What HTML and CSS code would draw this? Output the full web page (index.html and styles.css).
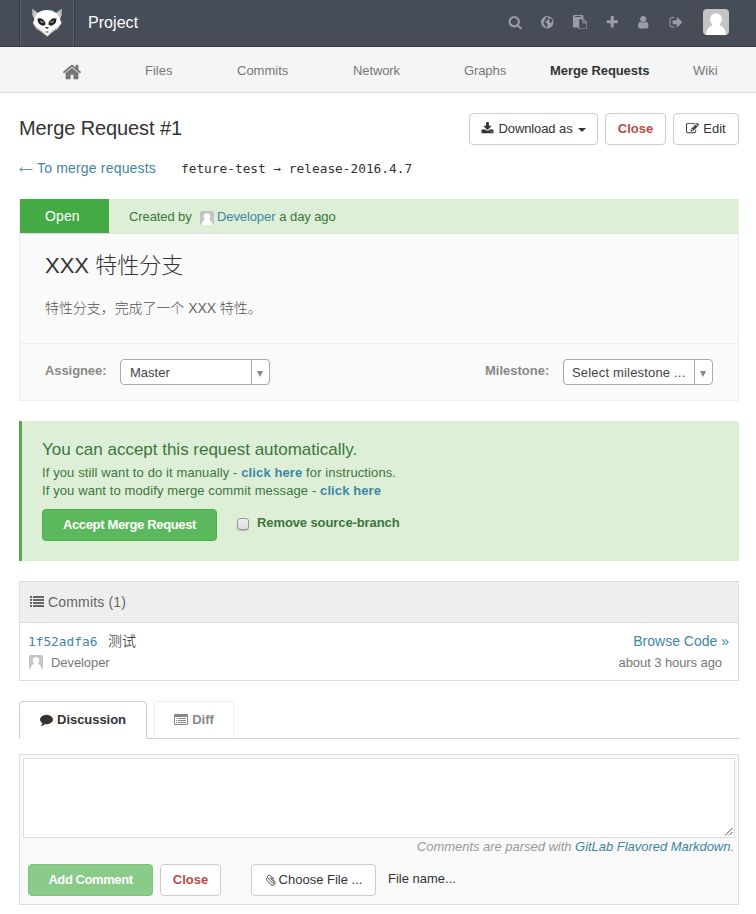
FILE: index.html
```html
<!DOCTYPE html>
<html lang="en">
<head>
<meta charset="utf-8">
<title>Merge Request #1</title>
<link rel="stylesheet" href="styles.css">
</head>
<body>
<svg class="defs" width="0" height="0">
  <symbol id="avatar" viewBox="0 0 26 26"><rect width="26" height="26" fill="#c4c4c4"/><circle cx="13" cy="10.200" r="6" fill="#fff"/><path d="M9 12h8v4.500c3.500 1 5.600 4 6 9.500H3c.4-5.500 2.500-8.500 6-9.500z" fill="#fff"/></symbol>
</svg>
<header class="topbar">
  <a class="logo" href="#">
    <svg width="32" height="30" viewBox="0 0 32 30">
      <path d="M1.500 1l5.500 4q3-3 9-3t9 3l5.500-4v6l-1.500 4 1.500 4-4 6-4 2-6 5.500L10 23l-4-2-4-6 1.500-4L1.500 7z" fill="#fff"/>
      <path d="M1.500 1l5 4-3.500 5-1-4zM30.500 1l-5 4 3.500 5 1-4z" fill="#aaa"/>
      <path d="M3 3.500l2 2-1.500 2.500zM29 3.500l-2 2L28.500 8z" fill="#eee"/>
      <path d="M1.500 14.500l4 4.500 5 3.500 5.500 5 5.500-5 5-3.500 4-4.500-3 5.500-5 3.500L16 28.500 9.500 23.500 4.500 20z" fill="#bbb"/>
      <path d="M6.500 10.500q3-1 5.500 1 2.300 1.500 2.500 5-2 2-4.500.5-3.500-1.500-3.500-6.500zM25.500 10.500q-3-1-5.500 1-2.300 1.500-2.500 5 2 2 4.500.5 3.500-1.500 3.500-6.500z" fill="#222"/>
      <path d="M9 13.200q2-1.200 4 1-2 1.400-4-1zM23 13.200q-2-1.200-4 1 2 1.400 4-1z" fill="#bbb"/>
      <circle cx="11.200" cy="13.600" r=".7" fill="#222"/><circle cx="20.800" cy="13.600" r=".7" fill="#222"/>
      <path d="M14 19h4l-2 2.200zM14.500 23.500h3v1h-3z" fill="#444"/>
    </svg>
  </a>
  <h1 class="project">Project</h1>
  <nav class="tools">
    <a class="nudge" href="#"><svg class="fa" viewBox="0 0 1792 1792"><path d="M1216 832q0-185-131.500-316.500t-316.500-131.500-316.500 131.500-131.500 316.500 131.500 316.500 316.500 131.500 316.500-131.500 131.500-316.500zm512 832q0 52-38 90t-90 38q-54 0-90-38l-343-342q-179 124-399 124-143 0-273.500-55.500t-225-150-150-225-55.500-273.500 55.500-273.500 150-225 225-150 273.500-55.500 273.500 55.500 225 150 150 225 55.500 273.500q0 220-124 399l343 343q37 37 37 90z"/></svg></a>
    <a class="nudge" href="#"><svg class="fa" viewBox="0 0 14 14"><circle cx="7" cy="7" r="6"/><path class="land" d="M6.300 1.900L8.300 2 7.500 3.200l1 .5-1.300 1.200-1.400 1.200-1 .9 1.600.7 1 1.400-1 2.600L5.300 12l-.5-2.200-1.500-1.300L4 6.200l.8-2zM9.600 3l1.600.9.900 2.100-1.500 1.700-1.600-.9.200-1.500-.5-1z"/></svg></a>
    <a class="nudge" href="#"><svg class="fa" viewBox="0 0 1792 1792"><path d="M768 1664h896v-640h-416q-40 0-68-28t-28-68v-416h-384v1152zm256-1440v-64q0-13-9.500-22.500t-22.500-9.500h-704q-13 0-22.500 9.500t-9.500 22.500v64q0 13 9.500 22.500t22.500 9.500h704q13 0 22.500-9.500t9.500-22.500zm256 672h299l-299-299v299zm512 128v672q0 40-28 68t-68 28h-960q-40 0-68-28t-28-68v-160h-544q-40 0-68-28t-28-68v-1344q0-40 28-68t68-28h1088q40 0 68 28t28 68v328q21 13 36 28l408 408q28 28 48 76t20 88z"/></svg></a>
    <a class="nudge" href="#"><svg class="fa" viewBox="0 0 1792 1792"><path d="M1600 736v192q0 40-28 68t-68 28h-416v416q0 40-28 68t-68 28h-192q-40 0-68-28t-28-68v-416h-416q-40 0-68-28t-28-68v-192q0-40 28-68t68-28h416v-416q0-40 28-68t68-28h192q40 0 68 28t28 68v416h416q40 0 68 28t28 68z"/></svg></a>
    <a href="#"><svg class="fa" viewBox="0 0 1792 1792"><path d="M1536 1399q0 109-62.500 187t-150.500 78h-854q-88 0-150.500-78t-62.500-187q0-85 8.500-160.500t31.500-152 58.500-131 94-89 134.500-34.500q131 128 313 128t313-128q76 0 134.500 34.500t94 89 58.500 131 31.500 152 8.500 160.500zm-256-887q0 159-112.500 271.500t-271.500 112.500-271.500-112.500-112.500-271.500 112.500-271.500 271.500-112.500 271.500 112.500 112.500 271.500z"/></svg></a>
    <a href="#"><svg class="fa" viewBox="0 0 1792 1792"><path d="M704 1440q0 4 1 20t.5 26.500-3 23.500-10 19.500-20.500 6.500h-320q-119 0-203.500-84.500t-84.500-203.500v-704q0-119 84.500-203.500t203.500-84.500h320q13 0 22.500 9.500t9.500 22.500q0 4 1 20t.5 26.500-3 23.500-10 19.500-20.500 6.500h-320q-66 0-113 47t-47 113v704q0 66 47 113t113 47h312l11.500 1 11.500 3 8 5.500 7 9 2 13.500zm928-544q0 26-19 45l-544 544q-19 19-45 19t-45-19-19-45v-288h-448q-26 0-45-19t-19-45v-384q0-26 19-45t45-19h448v-288q0-26 19-45t45-19 45 19l544 544q19 19 19 45z"/></svg></a>
  </nav>
  <svg class="me"><use href="#avatar"/></svg>
</header>
<nav class="mainnav">
  <a class="home" href="#"><svg width="20" height="20" viewBox="0 0 1792 1792"><path d="M1472 992v480q0 26-19 45t-45 19h-384v-384h-256v384h-384q-26 0-45-19t-19-45v-480q0-1 .5-3t.5-3l575-474 575 474q1 2 1 6zm223-69l-62 74q-8 9-21 11h-3q-13 0-21-7l-692-577-692 577q-12 8-24 7-13-2-21-11l-62-74q-8-10-7-23.500t11-21.500l719-599q32-26 76-26t76 26l244 204v-195q0-14 9-23t23-9h192q14 0 23 9t9 23v408l219 182q10 8 11 21.500t-7 23.500z"/></svg></a>
  <a class="n-files" href="#">Files</a>
  <a class="n-commits" href="#">Commits</a>
  <a class="n-network" href="#">Network</a>
  <a class="n-graphs" href="#">Graphs</a>
  <a class="n-merge active" href="#">Merge Requests</a>
  <a class="n-wiki" href="#">Wiki</a>
</nav>
<main class="content">
  <div class="titlerow">
    <h2>Merge Request #1</h2>
    <div class="actions">
      <a class="btn download" href="#"><svg class="bi" viewBox="0 0 1792 1792"><path fill-rule="evenodd" d="M1344 1344q0-26-19-45t-45-19-45 19-19 45 19 45 45 19 45-19 19-45zm256 0q0-26-19-45t-45-19-45 19-19 45 19 45 45 19 45-19 19-45zm128-224v320q0 40-28 68t-68 28h-1472q-40 0-68-28t-28-68v-320q0-40 28-68t68-28h465l135 136q58 56 136 56t136-56l136-136h464q40 0 68 28t28 68zm-325-569q17 41-14 70l-448 448q-18 19-45 19t-45-19l-448-448q-31-29-14-70 17-39 59-39h256v-448q0-26 19-45t45-19h256q26 0 45 19t19 45v448h256q42 0 59 39z"/></svg><span>Download as</span><i class="caret"></i></a>
      <a class="btn close" href="#">Close</a>
      <a class="btn edit" href="#"><svg class="bi" viewBox="0 0 1792 1792"><path d="M888 1184l116-116-152-152-116 116v56h96v96h56zm440-720q-16-16-33 1l-350 350q-17 17-1 33t33-1l350-350q17-17 1-33zm80 594v190q0 119-84.500 203.500t-203.500 84.500h-832q-119 0-203.500-84.500t-84.500-203.500v-832q0-119 84.500-203.500t203.500-84.500h832q63 0 117 25 15 7 18 23 3 17-9 29l-49 49q-14 14-32 8-23-6-45-6h-832q-66 0-113 47t-47 113v832q0 66 47 113t113 47h832q66 0 113-47t47-113v-126q0-13 9-22l64-64q15-15 35-7t20 29zm-96-738l288 288-672 672h-288v-288zm444 132l-92 92-288-288 92-92q28-28 68-28t68 28l152 152q28 28 28 68t-28 68z"/></svg><span>Edit</span></a>
    </div>
  </div>
  <div class="branches">
    <a class="back" href="#"><svg width="14" height="10" viewBox="0 0 14 10"><path d="M.8 6.500H13.500M3.500 4.300L.9 6.500l2.600 2.200" fill="none" stroke="currentColor" stroke-width=".9"/></svg><span>To merge requests</span></a>
    <code>feture-test → release-2016.4.7</code>
  </div>
  <section class="request">
    <div class="status">
      <strong class="state">Open</strong>
      <span class="by">Created by</span>
      <svg class="face"><use href="#avatar"/></svg>
      <a href="#">Developer</a><span class="when">a day ago</span>
    </div>
    <div class="body">
      <h3>XXX <span>特性分支</span></h3>
      <p><span class="cjk">特性分支，完成了一个</span> XXX <span class="cjk">特性。</span></p>
    </div>
    <div class="context">
      <label>Assignee:</label>
      <div class="select assignee"><span>Master</span><i></i></div>
      <label class="ms">Milestone:</label>
      <div class="select milestone"><span>Select milestone ...</span><i></i></div>
    </div>
  </section>
  <section class="accept">
    <h4>You can accept this request automatically.</h4>
    <p class="l1">If you still want to do it manually - <a href="#">click here</a> for instructions.</p>
    <p class="l2">If you want to modify merge commit message - <a href="#">click here</a></p>
    <div class="acceptrow">
      <a class="btn green" href="#">Accept Merge Request</a>
      <i class="check"></i>
      <label>Remove source-branch</label>
    </div>
  </section>
  <section class="commits">
    <div class="head"><svg width="14" height="11" viewBox="0 0 14 11"><path d="M0 0h2v2H0zM3 0h11v2H3zM0 3h2v2H0zM3 3h11v2H3zM0 6h2v2H0zM3 6h11v2H3zM0 9h2v2H0zM3 9h11v2H3z" /></svg><span>Commits (1)</span></div>
    <div class="commit">
      <div class="line"><a class="sha" href="#">1f52adfa6</a><span class="msg">测试</span><a class="browse" href="#">Browse Code »</a></div>
      <div class="line meta"><svg class="face"><use href="#avatar"/></svg><span class="author">Developer</span><span class="time">about 3 hours ago</span></div>
    </div>
  </section>
  <nav class="tabs">
    <a class="tab on" href="#"><svg width="13" height="13" viewBox="0 0 1792 1792"><path d="M1792 896q0 174-120 321.500t-326 233-450 85.500q-70 0-145-8-198 175-460 242-49 14-114 22-17 2-30.500-9t-17.500-29v-1q-3-4-.5-12t2-10 4.500-9.500l6-9 7-8.500 8-9q7-8 31-34.500t34.500-38 31-39.500 32.500-51 27-59 26-76q-157-89-247.500-220t-90.500-281q0-130 71-248.500t191-204.500 286-136.500 348-50.500q244 0 450 85.500t326 233 120 321.500z"/></svg><span>Discussion</span></a>
    <a class="tab diff" href="#"><svg width="14" height="11" viewBox="0 0 14 11"><path fill-rule="evenodd" d="M1 0h12q1 0 1 1v9q0 1-1 1H1q-1 0-1-1V1q0-1 1-1zM1 3v7h12V3zM2 4h1v1H2zM4 4h8v1H4zM2 6h1v1H2zM4 6h8v1H4zM2 8h1v1H2zM4 8h8v1H4z"/></svg><span>Diff</span></a>
  </nav>
  <section class="comment">
    <div class="area"><svg width="9" height="9" viewBox="0 0 9 9"><path d="M1 8.500L8.500 1M5 8.500L8.500 5" stroke="#555" fill="none"/></svg></div>
    <p class="hint">Comments are parsed with <a href="#">GitLab Flavored Markdown</a>.</p>
    <div class="formrow">
      <a class="btn green faded" href="#">Add Comment</a>
      <a class="btn close" href="#">Close</a>
      <a class="btn choose" href="#"><svg width="11" height="12" viewBox="0 0 12 13"><path d="M9.700 5.500L5.800 1.600Q4.500.6 3.300 1.700T3 4.200l5.200 5.600q.9.700 1.500.1t0-1.500L5.500 4.200M2 4.500q-1 1.300 0 2.400l4.300 4.500q2 1.500 3.600.3t1-3.200L6.500 3.500" fill="none" stroke="currentColor" stroke-width=".9"/></svg><span>Choose File ...</span></a>
      <span class="fname">File name...</span>
    </div>
  </section>
</main>
</body>
</html>
```
FILE: styles.css
```css
* { box-sizing: border-box; }
body {
  margin: 0;
  background: #fff;
  color: #333;
  font: 13px/18px "Liberation Sans", Arial, "Noto Sans CJK SC", sans-serif;
  white-space: nowrap;
}
h1, h2, h3, h4, p { margin: 0; font-weight: normal; }
a { color: #3f86a3; text-decoration: none; }
svg { display: block; flex: none; fill: currentColor; }
.defs { position: absolute; }

.topbar {
  display: flex;
  height: 47px;
  background: #474d57;
  border-bottom: 1px solid #373d47;
}
.logo {
  width: 56px;
  margin-left: 19px;
  padding: 8px 0 0 11px;
  border: solid #373d47;
  border-width: 0 1px;
  box-shadow: inset 1px 0 #5a606a, inset -1px 0 #5a606a;
}
.project { color: #fff; font-size: 16px; line-height: 45px; margin-left: 13px; letter-spacing: .05px; }
.tools { display: flex; margin-left: auto; height: 44px; }
.tools a { width: 32.300px; display: flex; align-items: center; justify-content: center; color: #979ca6; }
.tools .nudge { padding-left: 2px; }
.fa { width: 14.500px; height: 14.500px; }
.land { fill: #474d57; }
.me { width: 26px; height: 26px; margin: 9px 27px 0 11px; border-radius: 4px; }

.mainnav {
  display: flex;
  height: 46px;
  padding-left: 62px;
  background: #f5f5f5;
  border-bottom: 1px solid #ddd;
  line-height: 47px;
}
.mainnav a { color: #777; }
.mainnav .home { width: 83px; padding-top: 15px; }
.mainnav .n-files { width: 92px; }
.mainnav .n-commits { width: 116px; }
.mainnav .n-network { width: 111px; letter-spacing: -.1px; }
.mainnav .n-graphs { width: 86px; letter-spacing: -.1px; }
.mainnav .n-merge { width: 143px; }
.mainnav .active { color: #333; font-weight: bold; letter-spacing: -.08px; }

.content { margin: 0 17px 0 19px; }
.titlerow { display: flex; justify-content: space-between; margin-top: 20px; height: 32px; }
.titlerow h2 { font-size: 20px; line-height: 31px; letter-spacing: -.1px; }
.actions { display: flex; gap: 7px; }
.btn {
  height: 32px;
  display: flex;
  align-items: center;
  justify-content: center;
  background: #fff;
  border: 1px solid #ccc;
  border-radius: 4px;
  color: #333;
  padding-bottom: 1px;
}
.bi { width: 13px; height: 13px; margin-right: 4px; }
.download { width: 129px; letter-spacing: -.1px; }
.edit { width: 66px; }
.close { width: 61px; color: #b94a48; font-weight: bold; }
.caret { border: 4px solid transparent; border-top-color: #333; border-bottom: 0; margin: 3px 0 0 5px; }

.branches { display: flex; align-items: center; height: 20px; margin-top: 13px; line-height: 20px; }
.back { display: flex; align-items: center; width: 162px; font-size: 14px; letter-spacing: .18px; }
.back span { margin-left: 4px; }
code { padding-top: 1px; font: 12.800px/20px "DejaVu Sans Mono", monospace; }

.request { margin-top: 21px; height: 202px; border: 1px solid #eee; border-top: 0; background: #fafafa; }
.status { display: flex; align-items: center; height: 35px; background: #ddefd7; border-bottom: 1px solid #ddd; color: #3c763d; }
.state { width: 89px; height: 34px; align-self: flex-start; padding-left: 25px; background: #44aa44; color: #fff; font: 14px/34px "Liberation Sans", sans-serif; letter-spacing: .1px; }
.by { margin-left: 20px; width: 71px; }
.status span, .status a { padding-top: 2px; letter-spacing: -.1px; }
.face { width: 14px; height: 14px; border-radius: 2px; }
.status .face { margin: 3px 3px 0 0; }
.when { margin-left: 4px; }
.body { height: 110px; padding: 15px 25px 0; border-bottom: 1px solid #eee; }
.body h3 { font-size: 22px; line-height: 28px; font-weight: 400; height: 28px; }
.body h3 span { font-family: "Noto Sans CJK SC", sans-serif; font-weight: 300; }
.body p { margin-top: 18px; font-size: 14px; line-height: 24px; letter-spacing: -.07px; color: #666; }
.cjk { font-family: "Noto Sans CJK SC", sans-serif; font-weight: 300; color: #555; }
.context { display: flex; padding: 15px 25px 0; }
.context label { width: 75px; line-height: 23px; font-weight: bold; color: #888; letter-spacing: -.08px; }
.context .ms { margin-left: auto; width: 78px; letter-spacing: 0; }
.select { display: flex; width: 150px; height: 26px; border: 1px solid #aaa; border-radius: 4px; background: #fff; line-height: 25px; color: #444; }
.select span { flex: 1; padding-left: 9px; }
.milestone span { padding-left: 8px; letter-spacing: .18px; }
.select i { display: flex; justify-content: center; width: 18px; border-left: 1px solid #aaa; }
.select i::after { content: ""; height: 6px; margin: 11px 1px 0 0; border: 3px solid transparent; border-top: 6px solid #888; border-bottom: 0; }

.accept { margin-top: 20px; height: 140px; padding: 19px 20px 0; background: #ddefd7; border-left: 3px solid #5ca64d; color: #3c763d; }
.accept h4 { font-size: 17px; line-height: 20px; letter-spacing: -.01px; }
.accept p { line-height: 18px; letter-spacing: .11px; }
.accept .l1 { margin-top: 4px; }
.accept a:not(.btn) { font-weight: bold; }
.acceptrow { display: flex; margin-top: 9px; }
.green { width: 175px; background: #5cb85c; border-color: #4cae4c; color: #fff; font-weight: bold; letter-spacing: -.35px; }
.check { width: 12px; height: 12px; margin: 9px 8px 0 20px; border: 1px solid #999; border-radius: 3px; background: linear-gradient(#eee, #dcdcdc); box-shadow: 0 1px 1px #bbb; }
.acceptrow label { font-weight: bold; line-height: 27px; letter-spacing: -.1px; }

.commits { margin-top: 20px; height: 100px; border: 1px solid #ddd; }
.head { display: flex; align-items: center; height: 41px; padding-left: 10px; background: #eee; border-bottom: 1px solid #ddd; color: #666; font-size: 14px; letter-spacing: .17px; }
.head span { margin-left: 4px; }
.head svg { margin-bottom: 2px; }
.commit { padding: 7px 9px 0 8px; }
.line { display: flex; align-items: center; height: 21px; font-size: 14px; }
.sha { width: 80px; padding-top: 2px; font: 12.800px/20px "DejaVu Sans Mono", monospace; }
.msg { font-weight: 300; color: #111; }
.browse, .time { margin-left: auto; }
.meta { height: 22px; font-size: 13px; color: #777; letter-spacing: -.08px; }
.meta span { padding-top: 2px; }
.meta .face { margin-left: 1px; }
.meta .author { margin-left: 8px; }
.time { margin-right: 7px; }

.tabs { display: flex; gap: 7px; height: 38px; margin-top: 20px; box-shadow: inset 0 -1px #ccc; }
.tab { display: flex; align-items: center; justify-content: center; height: 38px; border: 1px solid #eee; border-bottom-color: #ccc; border-radius: 4px 4px 0 0; color: #888; font-weight: bold; letter-spacing: -.05px; }
.tab span { margin-left: 4px; }
.tab.on { width: 128px; color: #333; background: #fff; border-color: #ccc; border-bottom-color: #fff; }
.tab.on svg { margin-bottom: 2px; }
.diff { width: 80px; }
.diff svg { margin-bottom: 2px; }

.comment { height: 151px; margin-top: 15px; padding: 3px; border: 1px solid #ddd; background: #f9f9f9; }
.area { display: flex; align-items: flex-end; justify-content: flex-end; height: 80px; padding: 1px; border: 1px solid #ddd; background: #fff; }
.hint { padding-right: 1px; text-align: right; font-style: italic; line-height: 17px; letter-spacing: -.03px; color: #999; }
.formrow { display: flex; margin: 9px 0 0 5px; }
.faded { width: 125px; opacity: .7; margin-right: 7px; letter-spacing: -.42px; }
.formrow .faded { letter-spacing: -.42px; }
.choose { width: 125px; margin: 0 12px 0 30px; }
.choose span { margin-left: 3px; }
.fname { line-height: 29px; }
```
